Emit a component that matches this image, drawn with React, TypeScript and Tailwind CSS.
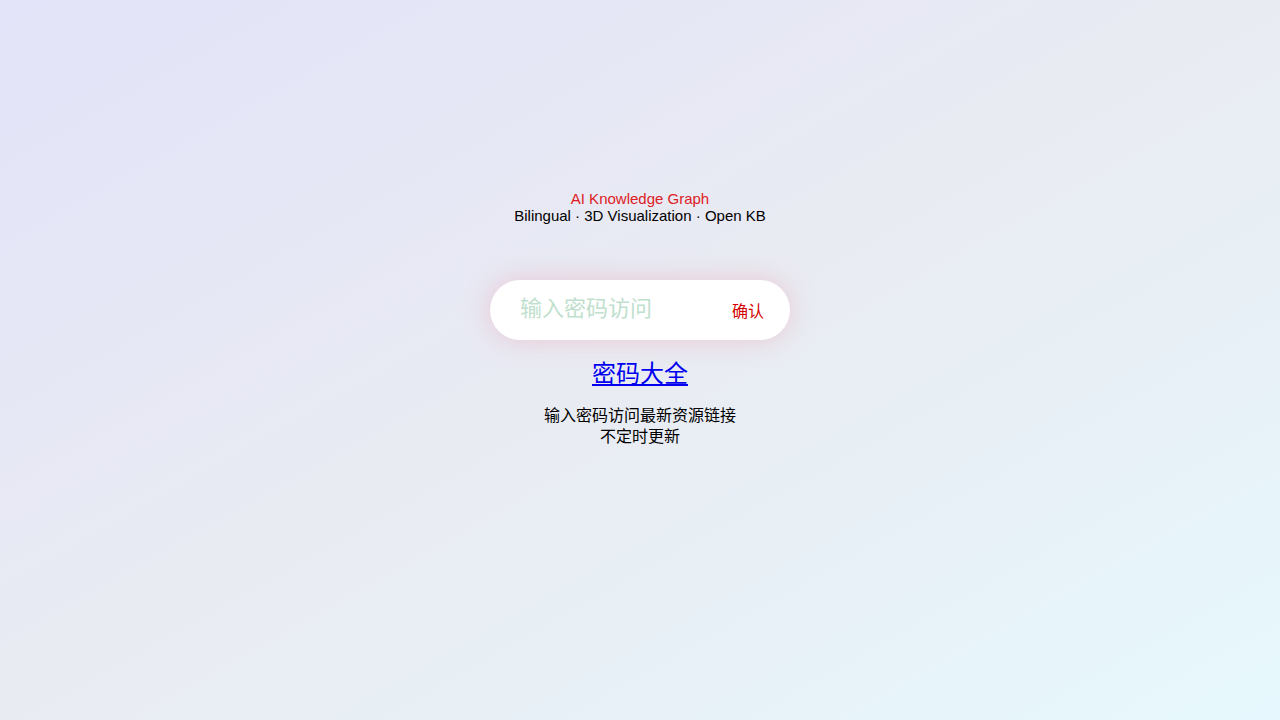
import { useState } from "react";

export default function App() {
  const [pwd, setPwd] = useState("");

  return (
    <main
      className="min-h-screen w-full bg-gradient-to-br from-[#e3e3f9] via-[#e9ebf2] to-[#e6f8fd] flex flex-col items-center pt-[190px]"
      style={{ fontFamily: '"Liberation Sans", Arial, "Noto Sans CJK SC", sans-serif' }}
    >
      {/* header */}
      <div className="text-center text-[15px] leading-[17px]">
        <div className="text-[#dd1c24]">AI Knowledge Graph</div>
        <div className="text-black">Bilingual · 3D Visualization · Open KB</div>
      </div>

      {/* password box */}
      <div className="mt-[56px] w-[300px] h-[60px] rounded-full bg-white flex items-center pl-[30px] pr-[26px] shadow-[0_0_26px_rgba(235,150,170,0.4)]">
        <input
          value={pwd}
          onChange={(e) => setPwd(e.target.value)}
          placeholder="输入密码访问"
          className="flex-1 min-w-0 bg-transparent outline-none text-[22px] leading-[28px] pb-[2px] text-gray-800 placeholder:text-[#bfe0cd]"
        />
        <button className="text-[16px] text-[#d40000] pt-[4px]">确认</button>
      </div>

      <a href="#" className="mt-[20px] text-[24px] leading-[28px] text-[#0000ee] underline">
        密码大全
      </a>

      <div className="mt-[17px] text-center text-[16px] leading-[21px] text-black">
        <div>输入密码访问最新资源链接</div>
        <div>不定时更新</div>
      </div>
    </main>
  );
}
